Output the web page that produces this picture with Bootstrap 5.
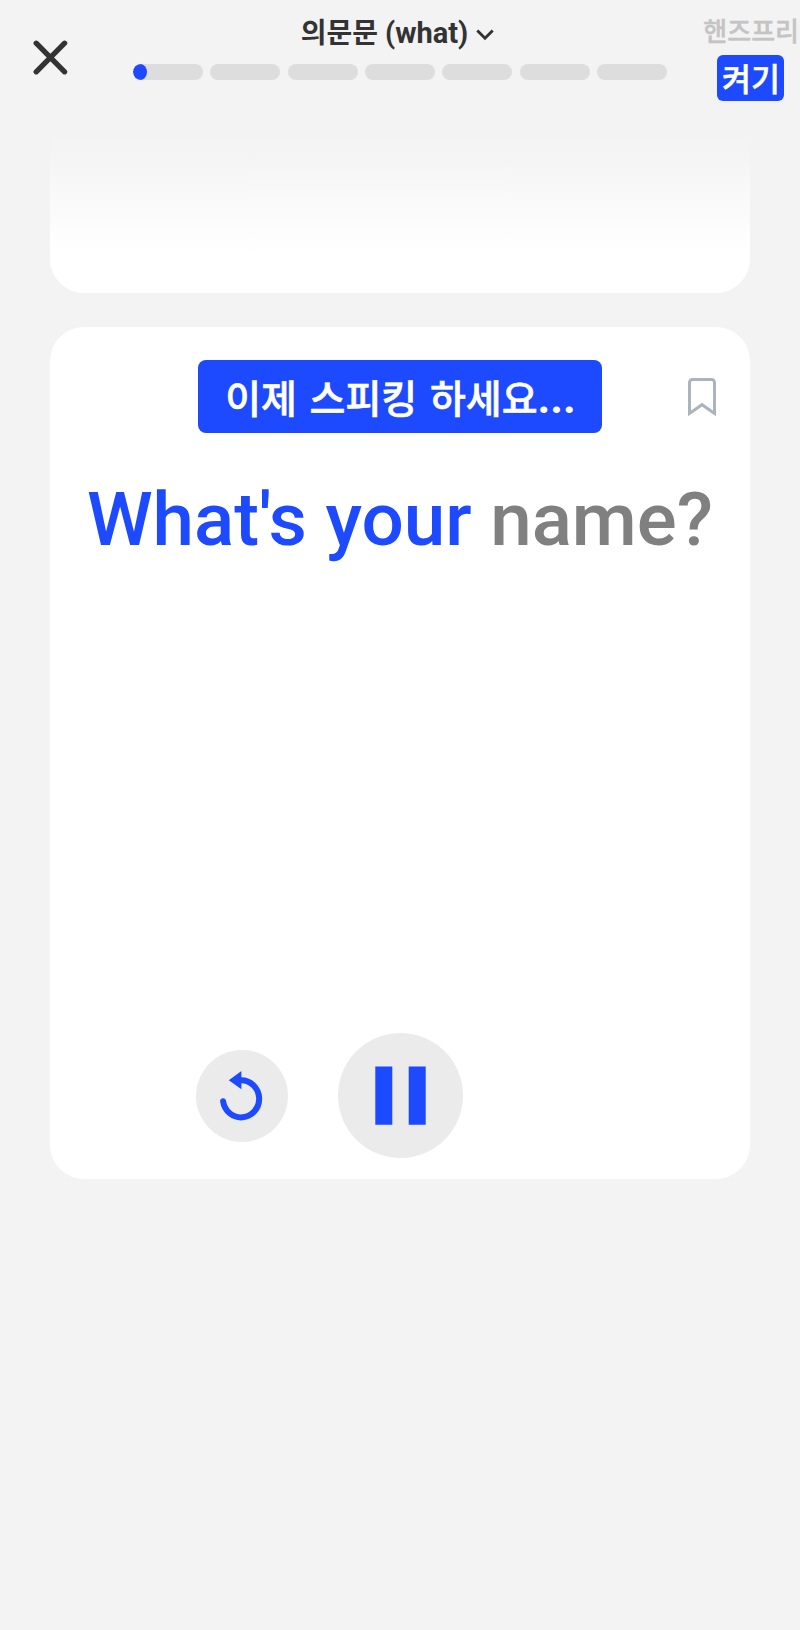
<!DOCTYPE html>
<html lang="ko">
<head>
<meta charset="utf-8">
<meta name="viewport" content="width=device-width, initial-scale=1">
<title>의문문 (what)</title>
<link href="https://cdn.jsdelivr.net/npm/bootstrap@5.3.0/dist/css/bootstrap.min.css" rel="stylesheet">
<style>
:root { --brand: #1d49ff; --page: #f3f3f3; }
body { background: var(--page); font-family: Roboto, "Noto Sans CJK KR", sans-serif; color: #333; min-height: 1630px; }
svg { display: block; }
.topbar { height: 133px; background: var(--page); display: grid; grid-template-columns: 133px 534px 133px; }
.close-btn { padding: 40px 0 0 33px; }
.lesson { height: 64px; padding: 3px 5px 0 0; font-size: 28px; font-weight: 700; line-height: 60px; }
.lesson svg { position: relative; top: 1px; }
.lesson-en { font-size: 29px; }
.steps { display: grid; grid-template-columns: repeat(7, 1fr); gap: 7.3px; }
.step { height: 16px; border-radius: 8px; background: #ddd; overflow: hidden; }
.step-fill { height: 16px; border-radius: 50%; background: var(--brand); }
.hands-label { font-size: 26px; font-weight: 500; -webkit-text-stroke: .4px; line-height: 30px; color: #c4c4c4; margin-top: 17px; padding-right: 1px; white-space: nowrap; }
.hands-toggle { width: 67px; height: 46px; margin: 8px 16px 0 0; padding: 3px 0 0 1px; border-radius: 6px; background: var(--brand); color: #fff; font-size: 31.5px; font-weight: 500; -webkit-text-stroke: .5px; line-height: 46px; white-space: nowrap; }
.prev-panel { height: 160px; margin: 0 50px; border-radius: 0 0 34px 34px; background: linear-gradient(var(--page) 0, #f5f5f5 30px, #fafafa 70px, #fff 120px); }
.talk-panel { height: 852px; margin: 34px 50px 0; border-radius: 34px; background: #fff; padding-top: 33px; }
.prompt-row { display: grid; grid-template-columns: 148px 404px 148px; }
.prompt { height: 72.5px; padding: 4px 0 0 1px; border-radius: 8px; background: var(--brand); color: #fff; font-size: 39px; font-weight: 500; word-spacing: 3px; -webkit-text-stroke: .6px; line-height: 72px; white-space: nowrap; }
.dots { font-size: 44px; line-height: 1; font-weight: 700; -webkit-text-stroke: 0; }
.phrase { margin: 39px 0 0; font-size: 74.6px; font-weight: 500; line-height: 96px; color: gray; white-space: nowrap; }
.spoken { color: var(--brand); }
.controls { height: 125px; margin-top: 465.5px; padding-left: 145.5px; gap: 50.3px; }
.round { background: #ebebeb; border-radius: 50%; border: 0; padding: 0; flex: none; }
.round-sm { width: 92px; height: 92px; }
.round-lg { width: 125px; height: 125px; }
</style>
</head>
<body>
<header class="topbar">
  <div class="close-btn">
    <svg width="35" height="35" viewBox="0 0 35 35" fill="none" stroke="#333" stroke-width="5.3" stroke-linecap="round"><path d="M3.2 3.2 31.6 31.8M31.6 3.2 3.2 31.8"/></svg>
  </div>
  <div>
    <div class="lesson d-flex align-items-center justify-content-center">
      <span>의문문 <span class="lesson-en">(what)</span></span>
      <svg class="ms-2" width="18" height="12" viewBox="0 0 18 12" fill="none" stroke="#333" stroke-width="2.9"><path d="M1.3 1.5 9 9.2l7.7-7.7"/></svg>
    </div>
    <div class="steps">
      <div class="step"><div class="step-fill" style="width:20%"></div></div>
      <div class="step"></div><div class="step"></div><div class="step"></div><div class="step"></div><div class="step"></div><div class="step"></div>
    </div>
  </div>
  <div class="d-flex flex-column align-items-end">
    <div class="hands-label">핸즈프리</div>
    <div class="hands-toggle text-center">켜기</div>
  </div>
</header>
<main>
  <section class="prev-panel"></section>
  <section class="talk-panel">
    <div class="prompt-row">
      <div></div>
      <div class="prompt text-center">이제 스피킹 하세요<span class="dots">...</span></div>
      <div class="d-flex justify-content-end">
        <svg style="margin:18px 34px 0 0" width="28" height="38" viewBox="0 0 28 38" fill="none" stroke="#abb3bd" stroke-width="3"><path d="M1.5 35.4V4.5a3 3 0 0 1 3-3h19a3 3 0 0 1 3 3v30.9L14 26.7Z"/></svg>
      </div>
    </div>
    <p class="phrase text-center"><span class="spoken">What's your</span> name?</p>
    <div class="controls d-flex align-items-center">
      <button class="round round-sm" type="button" aria-label="다시">
        <svg width="92" height="92" viewBox="0 0 92 92"><path d="M27.1 51.2A18.1 18.6 0 1 0 45 30.2" fill="none" stroke="#1d49ff" stroke-width="6" stroke-linecap="round"/><path d="M32.8 30.2 45.4 21v18.2Z" fill="#1d49ff"/></svg>
      </button>
      <button class="round round-lg" type="button" aria-label="일시정지">
        <svg width="125" height="125" viewBox="0 0 125 125" fill="#1d49ff"><path d="M37.3 33.4h17v58.3h-17zM70.7 33.4h17v58.3h-17z"/></svg>
      </button>
    </div>
  </section>
</main>
<script src="https://cdn.jsdelivr.net/npm/bootstrap@5.3.0/dist/js/bootstrap.bundle.min.js"></script>
</body>
</html>
